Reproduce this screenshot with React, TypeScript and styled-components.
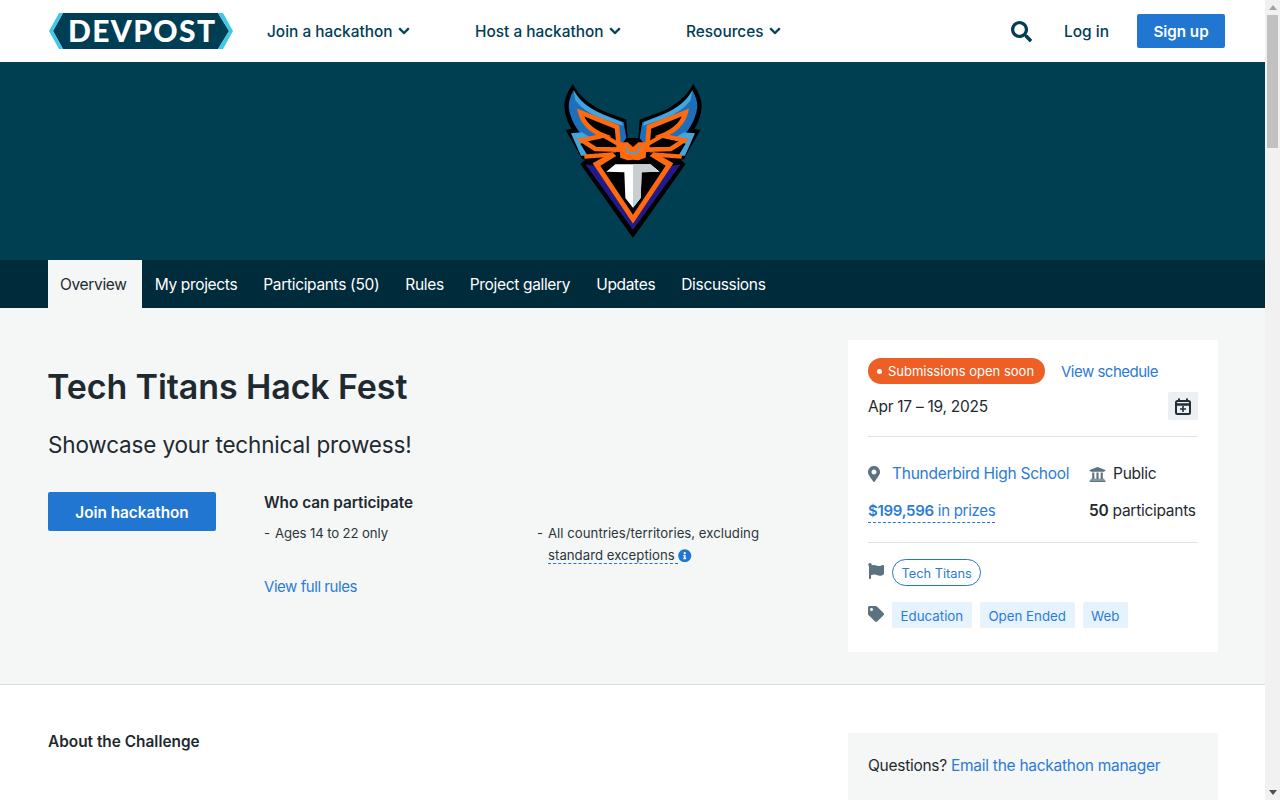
import React from "react";
import styled, { createGlobalStyle } from "styled-components";
import { FaSearch, FaChevronDown, FaMapMarkerAlt, FaUniversity, FaFlag, FaTag, FaInfoCircle } from "react-icons/fa";

const Global = createGlobalStyle`
  html, body { margin: 0; padding: 0; background: #fff; }
  body { font-family: "Inter", "Liberation Sans", sans-serif; color: #1f2a30; font-size: 15.5px; letter-spacing: -0.27px; }
  * { box-sizing: border-box; }
  a { color: #2b7bd6; text-decoration: none; }
`;

const Page = styled.div`min-height: 4630px; padding-right: 15px;`;
const Rail = styled.div`
  position: fixed; top: 0; right: 0; bottom: 0; width: 15px; background: #f1f1f1;
  display: flex; flex-direction: column; align-items: center; justify-content: space-between;
`;
const RailCap = styled.span<{ $down?: boolean }>`
  height: 15px; display: flex; align-items: center; color: ${(p) => (p.$down ? "#505050" : "#a3a3a3")};
  &::before {
    content: ""; border-left: 4.5px solid transparent; border-right: 4.5px solid transparent;
    ${(p) => (p.$down ? "border-top: 5px solid currentColor;" : "border-bottom: 5px solid currentColor;")}
  }
`;
const RailThumb = styled.span`width: 11px; height: 133px; background: #c1c1c1; margin-bottom: auto;`;
const Nav = styled.header`height: 62px; display: flex; align-items: center; padding: 0 40px 0 49px; background: #fff; letter-spacing: 0;`;
const Logo = styled.svg`width: 184px; height: 36px; flex: none;`;
const Menu = styled.nav`display: flex; margin-left: 34px; flex: 1;`;
const MenuItem = styled.a<{ $w: number }>`
  width: ${(p) => p.$w}px; display: flex; align-items: center; gap: 5px;
  color: #003e54; font-weight: 500; font-size: 15.4px;
  svg { font-size: 12px; stroke: currentColor; stroke-width: 24; }
`;
const SearchBtn = styled.span`color: #003e54; font-size: 21px; display: flex; margin-right: 32px;`;
const Login = styled.a`color: #003e54; font-weight: 500; font-size: 15.5px; margin-right: 28px;`;
const SignUp = styled.a`
  width: 88px; height: 34px; background: #2176d2; color: #fff; border-radius: 2px;
  display: flex; align-items: center; justify-content: center; font-weight: 600; font-size: 15.2px;
`;
const Hero = styled.div`height: 198px; background: #003e52; display: flex; justify-content: center; padding-top: 21px;`;
const Crest = styled.svg`width: 140px; height: 155px;`;
const Tabs = styled.nav`height: 48px; background: #002b3a; padding-left: 48px; display: flex;`;
const Tab = styled.a<{ $active?: boolean }>`
  padding: ${(p) => (p.$active ? "0 15px 0 12px" : "0 13px")}; display: flex; align-items: center; font-size: 15.5px; letter-spacing: -0.33px;
  color: ${(p) => (p.$active ? "#1f2a30" : "#fff")};
  background: ${(p) => (p.$active ? "#f5f6f6" : "transparent")};
`;
const Main = styled.section`
  height: 377px; background: #f5f6f6; border-bottom: 1px solid #d9dfe3;
  padding: 32px 47px 0 48px; display: flex; justify-content: space-between;
`;
const Left = styled.div`width: 760px;`;
const Title = styled.h1`margin: 25px 0 0 -1px; font-size: 34px; line-height: 44px; font-weight: 600; color: #1f2a30; letter-spacing: -0.1px;`;
const Sub = styled.p`margin: 21px 0 0; font-size: 22.5px; line-height: 30px; color: #1f2a30; letter-spacing: -0.16px;`;
const Row = styled.div`display: flex; margin-top: 32px;`;
const Join = styled.a`
  width: 168px; height: 39px; background: #2176d2; color: #fff; border-radius: 2px; flex: none; padding-top: 1px;
  display: flex; align-items: center; justify-content: center; font-weight: 600; font-size: 15.3px; letter-spacing: 0;
`;
const Who = styled.div`margin-left: 48px; flex: 1;`;
const WhoTitle = styled.h3`margin: 0; font-size: 15.3px; line-height: 22px; font-weight: 600; letter-spacing: 0;`;
const Lists = styled.div`display: grid; grid-template-columns: 273px 1fr; margin-top: 8px;`;
const Item = styled.div<{ $tight?: boolean }>`
  font-size: 13.2px; line-height: 22px; padding-left: 11px; position: relative; color: #2b363c;
  letter-spacing: ${(p) => (p.$tight ? "-0.12px" : "0.02px")};
  &::before { content: "-"; position: absolute; left: 0; }
`;
const Dotted = styled.span`text-decoration: underline dashed #2176d2 1px; text-underline-offset: 3px;`;
const Info = styled.span`color: #2176d2; font-size: 13.5px; svg { vertical-align: -2px; }`;
const Rules = styled.a`display: block; margin-top: 10px; font-size: 15px; line-height: 22px; letter-spacing: -0.45px;`;
const Card = styled.aside`width: 370px; height: 312px; background: #fff; padding: 18px 20px 0;`;
const Status = styled.div`display: flex; align-items: center; gap: 16px; a { font-size: 15px; letter-spacing: -0.5px; }`;
const Pill = styled.span`
  width: 177px; height: 26px; border-radius: 13px; background: #ee5f26; color: #fff; font-size: 13px; letter-spacing: 0; padding-right: 2px;
  display: flex; align-items: center; justify-content: center; gap: 6px; white-space: nowrap;
  &::before { content: ""; width: 5px; height: 5px; border-radius: 50%; background: #fff; }
`;
const DateRow = styled.div`display: flex; justify-content: space-between; align-items: center; height: 28px; margin-top: 8px;`;
const CalBtn = styled.span`width: 30px; height: 28px; background: #edf0f2; border-radius: 2px; display: flex; align-items: center; justify-content: center;`;
const Hr = styled.hr<{ $m: number }>`border: 0; border-top: 1px solid #dde4e8; margin: ${(p) => p.$m}px 0 0;`;
const Meta = styled.div<{ $top: number }>`display: grid; grid-template-columns: 221px 1fr; margin-top: ${(p) => p.$top}px; line-height: 22px; align-items: start; white-space: nowrap;`;
const IconText = styled.span`display: flex; align-items: center;`;
const IconSlot = styled.span<{ $up?: number; $left?: number }>`
  width: 24px; display: flex; color: #5b7280; flex: none;
  svg { transform: translate(${(p) => -(p.$left ?? 0)}px, ${(p) => -(p.$up ?? 0)}px); }
`;
const Prize = styled.a`justify-self: start; border-bottom: 1px dashed #2176d2; line-height: 22px; font-size: 15px; letter-spacing: -0.28px; b { font-weight: 600; }`;
const Strong = styled.b`font-weight: 600;`;
const TagRow = styled.div<{ $top: number }>`display: flex; align-items: center; margin-top: ${(p) => p.$top}px; letter-spacing: 0;`;
const Theme = styled.a`height: 27px; padding: 1px 8.5px 0; border: 1px solid #2176d2; border-radius: 14px; font-size: 12.8px; display: flex; align-items: center;`;
const Tag = styled.a`height: 26px; padding: 1px 8.6px 0; background: #e6f3fd; border-radius: 2px; font-size: 13.3px; display: flex; align-items: center; margin-right: 8px;`;
const Lower = styled.section`padding: 48px 47px 0 48px; display: flex; justify-content: space-between;`;
const About = styled.h3`margin: 1px 0 0; font-size: 15.4px; line-height: 16px; font-weight: 600; letter-spacing: 0;`;
const Questions = styled.div`width: 370px; height: 200px; background: #f5f6f6; padding: 22px 20px; line-height: 22px;`;

const half = (
  <>
    <path d="M97 42 Q70 85 72 110 Q75 150 94 178 L76 181 L125 268 L135 270 L120 283 L278 505 V205 H262 L258 150 L190 125 Q125 95 97 42Z" fill="#000" />
    <path d="M100 62 Q84 90 85 112 Q90 150 112 180 L130 205 L225 250 L258 205 L250 158 L190 135 Q125 110 100 62Z" fill="#1d6fbb" />
    <path d="M100 62 Q125 110 190 135 L245 158 L248 168 L180 146 Q130 125 105 92 Z" fill="#42a5dc" />
    <path d="M92 191 L125 188 L158 208 L120 222 L142 258 L122 258 Z" fill="#42a5dc" />
    <path d="M120 128 L230 172 L236 240 L165 238 L125 212 L190 198 Q132 175 120 128 Z" fill="#000" stroke="#ff6a0e" strokeWidth="14" />
    <path d="M190 198 L232 222" stroke="#ff6a0e" strokeWidth="12" fill="none" />
    <path d="M132 261 L220 254" stroke="#ff6a0e" strokeWidth="13" fill="none" />
    <path d="M135 284 L278 480 V462 L163 288 Z" fill="#221a8c" />
    <path d="M157 281 L215 248 L228 259 L180 288 L278 435 V462 Z" fill="#ff6a0e" />
    <path d="M236 218 L262 218 L278 232 V270 L262 272 L240 264 Z" fill="#ff6a0e" />
    <path d="M278 284 L225 284 L198 306 L252 308 L255 385 L278 414 Z" fill="#fff" />
  </>
);

export default function App() {
  return (
    <Page>
      <Global />
      <Nav>
        <Logo viewBox="0 0 184 36">
          <path d="M14 0H169L180 18L169 36H14L4 18Z" fill="#003e54" />
          <path d="M10 0H14L4 18L14 36H10L0 18Z M169 0H174L184 18L174 36H169L180 18Z" fill="#3fc8e8" />
          <text x="19" y="29" fontFamily="Lato, sans-serif" fontWeight="900" fontSize="30" textLength="147" lengthAdjust="spacing" fill="#fff">DEVPOST</text>
        </Logo>
        <Menu>
          <MenuItem $w={208} href="#">Join a hackathon <FaChevronDown /></MenuItem>
          <MenuItem $w={211} href="#">Host a hackathon <FaChevronDown /></MenuItem>
          <MenuItem $w={200} href="#">Resources <FaChevronDown /></MenuItem>
        </Menu>
        <SearchBtn><FaSearch /></SearchBtn>
        <Login href="#">Log in</Login>
        <SignUp href="#">Sign up</SignUp>
      </Nav>
      <Hero>
        <Crest viewBox="68 40 420 465">
          {half}
          <g transform="translate(556 0) scale(-1 1)">{half}</g>
          <path d="M278 284 H330 L355 306 L304 308 L301 385 L278 414 Z" fill="#c9ced1" />
          <path d="M258 232 Q262 258 278 248 Q294 258 298 232" fill="none" stroke="#42a5dc" strokeWidth="5" />
        </Crest>
      </Hero>
      <Tabs>
        <Tab $active href="#">Overview</Tab>
        <Tab href="#">My projects</Tab>
        <Tab href="#">Participants (50)</Tab>
        <Tab href="#">Rules</Tab>
        <Tab href="#">Project gallery</Tab>
        <Tab href="#">Updates</Tab>
        <Tab href="#">Discussions</Tab>
      </Tabs>
      <Main>
        <Left>
          <Title>Tech Titans Hack Fest</Title>
          <Sub>Showcase your technical prowess!</Sub>
          <Row>
            <Join href="#">Join hackathon</Join>
            <Who>
              <WhoTitle>Who can participate</WhoTitle>
              <Lists>
                <Item $tight>Ages 14 to 22 only</Item>
                <Item>All countries/territories, excluding<br /><Dotted>standard exceptions </Dotted><Info><FaInfoCircle /></Info></Item>
              </Lists>
              <Rules href="#">View full rules</Rules>
            </Who>
          </Row>
        </Left>
        <Card>
          <Status><Pill>Submissions open soon</Pill><a href="#">View schedule</a></Status>
          <DateRow>
            Apr 17 – 19, 2025
            <CalBtn>
              <svg width="16" height="17" viewBox="0 0 16 17" fill="none" stroke="#1f2f38" strokeWidth="2">
                <rect x="1" y="3" width="14" height="13" rx="1.5" />
                <path d="M1 6.5H15" strokeWidth="2.5" />
                <path d="M4 0.5V4M12 0.5V4" />
                <path d="M8 8V14M5 11H11" strokeWidth="1.6" />
              </svg>
            </CalBtn>
          </DateRow>
          <Hr $m={16} />
          <Meta $top={26}>
            <IconText><IconSlot $left={2}><FaMapMarkerAlt size={16} /></IconSlot><a href="#">Thunderbird High School</a></IconText>
            <IconText><IconSlot><FaUniversity size={17} /></IconSlot>Public</IconText>
          </Meta>
          <Meta $top={15}>
            <Prize href="#"><b>$199,596</b> in prizes</Prize>
            <span><Strong>50</Strong> participants</span>
          </Meta>
          <Hr $m={19} />
          <TagRow $top={16}><IconSlot $up={2}><FaFlag size={16} /></IconSlot><Theme href="#">Tech Titans</Theme></TagRow>
          <TagRow $top={16}><IconSlot $up={1}><FaTag size={16} /></IconSlot><Tag href="#">Education</Tag><Tag href="#">Open Ended</Tag><Tag href="#">Web</Tag></TagRow>
        </Card>
      </Main>
      <Lower>
        <About>About the Challenge</About>
        <Questions>Questions? <a href="#">Email the hackathon manager</a></Questions>
      </Lower>
      <Rail>
        <RailCap />
        <RailThumb />
        <RailCap $down />
      </Rail>
    </Page>
  );
}
